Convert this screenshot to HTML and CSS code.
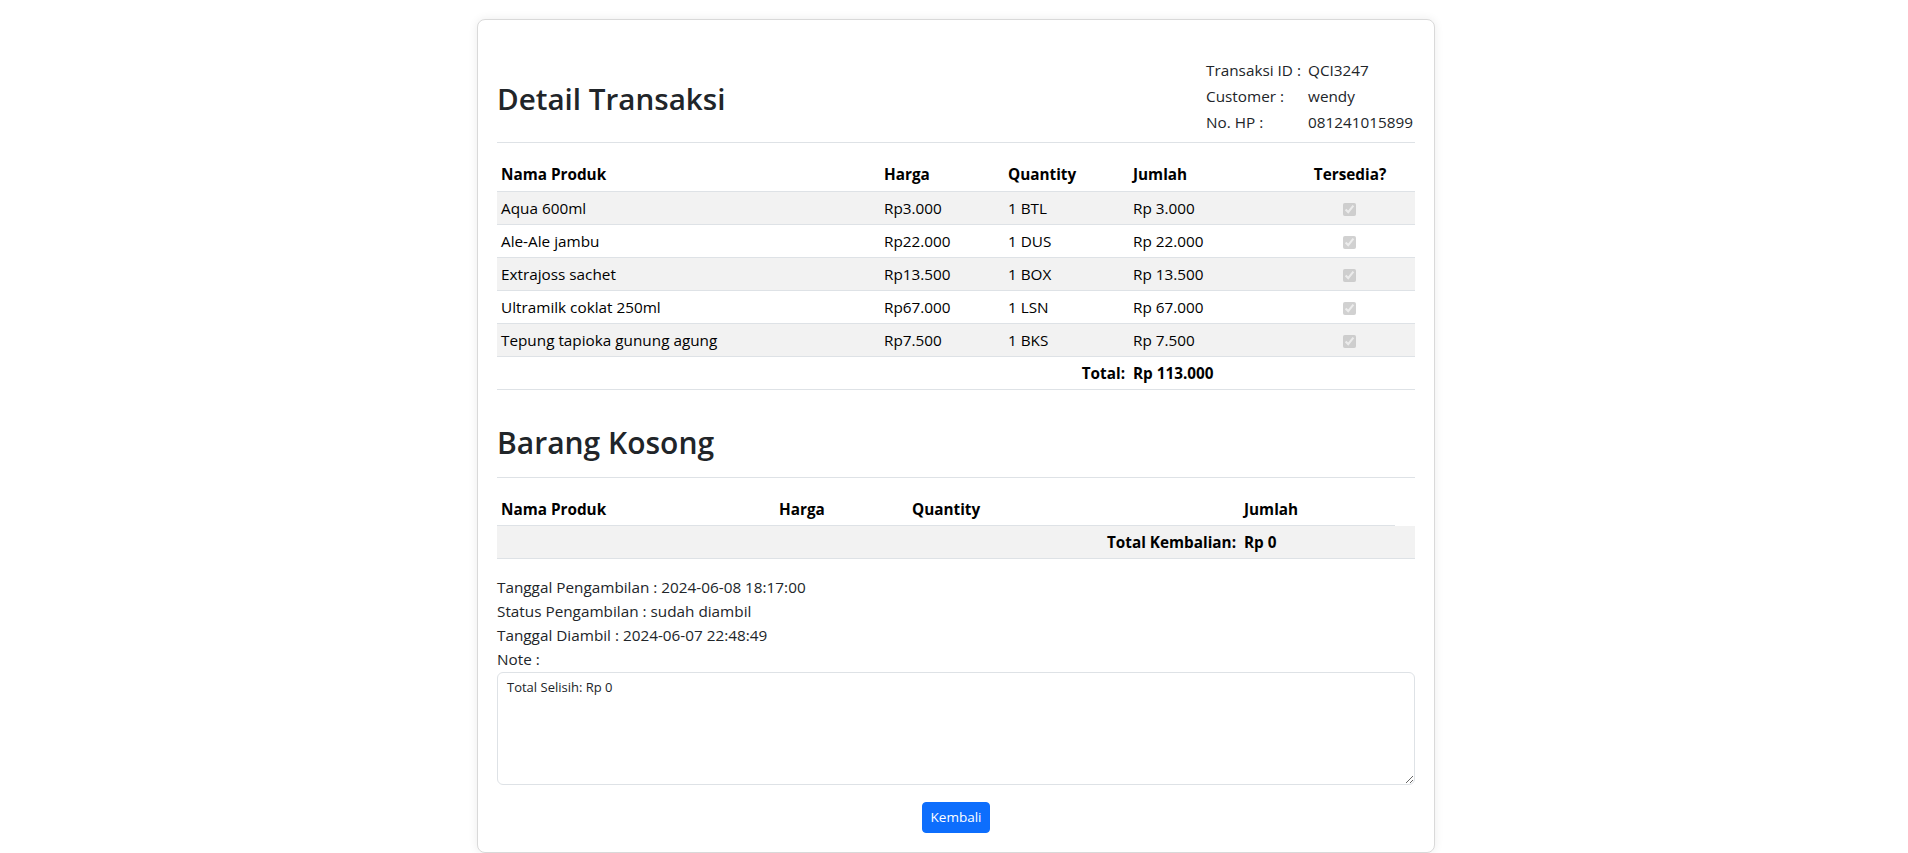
FILE: index.html
```html
<!DOCTYPE html>
<html lang="id">
<head>
<meta charset="utf-8">
<title>Detail Transaksi</title>
<link rel="stylesheet" href="styles.css">
</head>
<body>
<div class="card">
  <div class="head">
    <h2 class="title title1">Detail Transaksi</h2>
    <table class="info">
      <tr><td class="info-label">Transaksi ID :</td><td>QCI3247</td></tr>
      <tr><td class="info-label">Customer :</td><td>wendy</td></tr>
      <tr><td class="info-label">No. HP :</td><td>081241015899</td></tr>
    </table>
  </div>
  <hr class="rule rule-top">
  <table class="tbl">
    <colgroup>
      <col class="c1a"><col class="c1b"><col class="c1c"><col class="c1d"><col class="c1e">
    </colgroup>
    <thead>
      <tr><th>Nama Produk</th><th>Harga</th><th>Quantity</th><th>Jumlah</th><th class="center">Tersedia?</th></tr>
    </thead>
    <tbody>
      <tr class="odd"><td>Aqua 600ml</td><td>Rp3.000</td><td>1 BTL</td><td>Rp 3.000</td><td class="center"><input type="checkbox" checked disabled class="chk"></td></tr>
      <tr><td>Ale-Ale jambu</td><td>Rp22.000</td><td>1 DUS</td><td>Rp 22.000</td><td class="center"><input type="checkbox" checked disabled class="chk"></td></tr>
      <tr class="odd"><td>Extrajoss sachet</td><td>Rp13.500</td><td>1 BOX</td><td>Rp 13.500</td><td class="center"><input type="checkbox" checked disabled class="chk"></td></tr>
      <tr><td>Ultramilk coklat 250ml</td><td>Rp67.000</td><td>1 LSN</td><td>Rp 67.000</td><td class="center"><input type="checkbox" checked disabled class="chk"></td></tr>
      <tr class="odd"><td>Tepung tapioka gunung agung</td><td>Rp7.500</td><td>1 BKS</td><td>Rp 7.500</td><td class="center"><input type="checkbox" checked disabled class="chk"></td></tr>
      <tr><td colspan="3" class="right bold">Total:</td><td class="bold">Rp 113.000</td><td></td></tr>
    </tbody>
  </table>
  <h2 class="title title2">Barang Kosong</h2>
  <hr class="rule rule-mid">
  <table class="tbl">
    <colgroup>
      <col class="c2a"><col class="c2b"><col class="c2c"><col class="c2d"><col class="c2e">
    </colgroup>
    <thead>
      <tr><th>Nama Produk</th><th>Harga</th><th>Quantity</th><th>Jumlah</th></tr>
    </thead>
    <tbody>
      <tr class="odd"><td colspan="3" class="right bold">Total Kembalian:</td><td colspan="2" class="bold">Rp 0</td></tr>
    </tbody>
  </table>
  <div class="meta">
    <div>Tanggal Pengambilan : 2024-06-08 18:17:00</div>
    <div>Status Pengambilan : sudah diambil</div>
    <div>Tanggal Diambil : 2024-06-07 22:48:49</div>
    <div>Note :</div>
  </div>
  <textarea class="note" readonly>Total Selisih: Rp 0</textarea>
  <div class="actions"><button class="btn" type="button">Kembali</button></div>
</div>
</body>
</html>
```

FILE: styles.css
```css
* { box-sizing: border-box; }

body {
  margin: 0;
  background: #fff;
  font-family: "Open Sans", "Noto Sans", sans-serif;
  font-size: 15.3px;
  line-height: 24px;
  color: #212529;
}

.card {
  width: 958px;
  margin: 19px 0 0 477px;
  border: 1px solid #d9d9d9;
  border-radius: 8px;
  box-shadow: 0 0 10px rgba(0, 0, 0, 0.08);
  padding: 19px 19px 19px;
  background: #fff;
}

.head {
  display: flex;
  justify-content: space-between;
  align-items: center;
  margin-top: 18px;
}

.title {
  margin: 0;
  font-size: 30px;
  line-height: 38px;
  font-weight: 600;
  color: #212529;
}
.title1 {
  font-size: 29.6px;
  margin-top: 6px;
}

.info {
  border-collapse: collapse;
  margin-right: 2px;
}
.info td {
  padding: 0;
  height: 26px;
  line-height: 26px;
  vertical-align: middle;
}
.info-label { width: 102px; }

.rule {
  border: 0;
  border-top: 1px solid #dee2e6;
  margin: 0;
  height: 0;
}
.rule-top { margin: 7px 0 15px; }
.rule-mid { margin: 15px 0 15px; }

.tbl {
  width: 100%;
  table-layout: fixed;
  border-collapse: collapse;
  color: #000;
}
.tbl th, .tbl td {
  padding: 4px;
  text-align: left;
  line-height: 24px;
  height: 33px;
  border-bottom: 1px solid #dee2e6;
  vertical-align: middle;
  white-space: nowrap;
}
.tbl th { font-weight: 700; }
.tbl .odd td { background: #f2f2f2; }
.tbl .center { text-align: center; }
.tbl .right { text-align: right; }
.tbl .bold { font-weight: 700; }

.c1a { width: 383px; }
.c1b { width: 124px; }
.c1c { width: 125px; }
.c1d { width: 156px; }
.c1e { width: 130px; }

.c2a { width: 278px; }
.c2b { width: 133px; }
.c2c { width: 332px; }
.c2d { width: 155px; }
.c2e { width: 20px; }

.chk {
  width: 13px;
  height: 13px;
  margin: 0 0 0 -2px;
  vertical-align: middle;
}

.title2 { margin-top: 34px; }

.meta { margin-top: 16px; }
.meta div { line-height: 24px; }

.note {
  display: block;
  width: 100%;
  height: 113px;
  margin-top: 1px;
  padding: 4px 9px;
  border: 1px solid #dee2e6;
  border-radius: 6px;
  font-family: "Open Sans", "Noto Sans", sans-serif;
  font-size: 13px;
  line-height: 20px;
  color: #212529;
  background: #fff;
}

.actions {
  display: flex;
  justify-content: center;
  margin-top: 17px;
}

.btn {
  font-family: "Open Sans", "Noto Sans", sans-serif;
  font-size: 13.5px;
  line-height: 21px;
  padding: 4px 8px;
  color: #fff;
  background: #0d6efd;
  border: 1px solid #0d6efd;
  border-radius: 4px;
}
```
